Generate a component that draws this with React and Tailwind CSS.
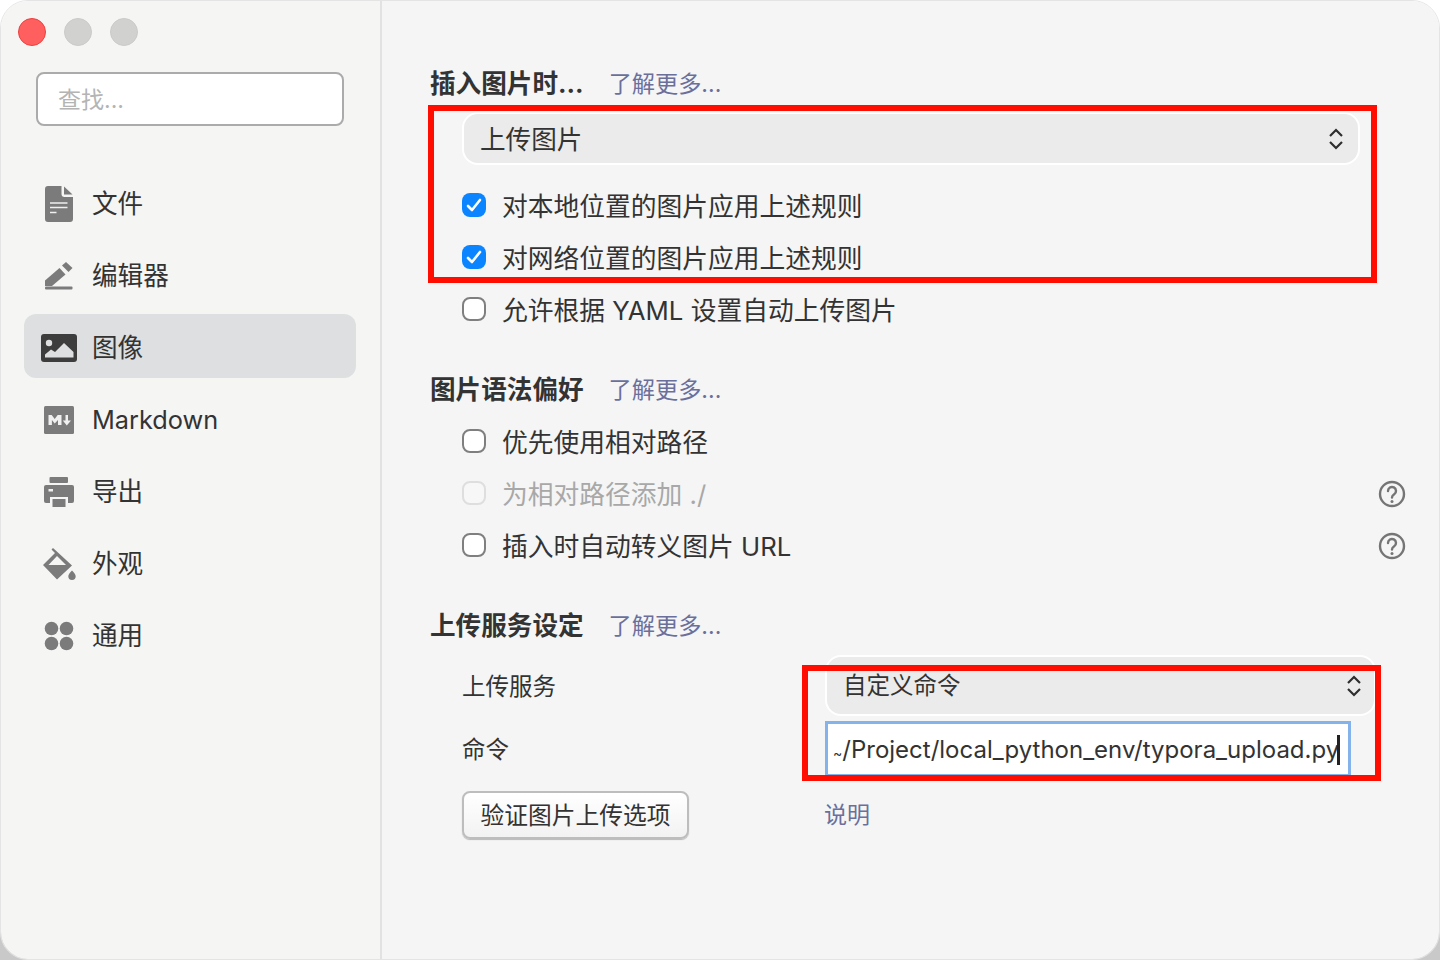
function FileIcon() {
  return (
    <svg width="28" height="36" viewBox="0 0 28 36">
      <path d="M3 0h13.500v8a3 3 0 0 0 3 3H28v22a3 3 0 0 1-3 3H3a3 3 0 0 1-3-3V3a3 3 0 0 1 3-3z" fill="#7b7b7b" />
      <path d="M19 0.500 27.500 8.500H19z" fill="#7b7b7b" />
      <path d="M5 17h17.500M5 21.500h17.500M5 26.500h6.500" stroke="#f0f0f0" strokeWidth="1.600" />
    </svg>
  )
}

function PenIcon() {
  return (
    <svg width="28" height="28" viewBox="0 0 28 28">
      <path d="M0 18.500 14.500 6l6 6.500L7 24H0z" fill="#7b7b7b" />
      <path d="M17 3.500 21 0l6.500 6L23.500 10z" fill="#7b7b7b" />
      <rect x="0" y="24.500" width="27.500" height="3" rx="1" fill="#7b7b7b" />
    </svg>
  )
}

function ImageIcon() {
  return (
    <svg width="36" height="28" viewBox="0 0 36 28">
      <rect width="36" height="28" rx="3" fill="#3d3d3d" />
      <circle cx="8" cy="9" r="3.200" fill="#dedfe1" />
      <path d="M4 23.500v-3l6-5 4 2.500 9-9 9.500 9v5.500z" fill="#dedfe1" />
    </svg>
  )
}

function MarkdownIcon() {
  return (
    <svg width="30" height="28" viewBox="0 0 30 28">
      <rect width="30" height="28" rx="1.500" fill="#7b7b7b" />
      <path d="M4.500 19V9h3.200l3 4 3-4h3.800v10h-3.500v-5l-3.300 3.500L7.900 14v5z" fill="#f0f0f0" />
      <path d="M21.500 9h2.500v5.500h3L22.800 19.500 18.800 14.500h2.700z" fill="#f0f0f0" />
    </svg>
  )
}

function PrinterIcon() {
  return (
    <svg width="30" height="30" viewBox="0 0 30 30">
      <rect x="5.500" y="0" width="18.500" height="6" rx="1" fill="#7b7b7b" />
      <path d="M2 8h26a2 2 0 0 1 2 2v14a2 2 0 0 1-2 2H2a2 2 0 0 1-2-2V10a2 2 0 0 1 2-2z" fill="#7b7b7b" />
      <rect x="4.500" y="12" width="4.500" height="2.500" fill="#f0f0f0" />
      <rect x="6" y="20" width="18" height="10" fill="#f5f5f4" />
      <rect x="8.500" y="22" width="13" height="8" fill="#7b7b7b" />
    </svg>
  )
}

function BucketIcon() {
  return (
    <svg className="ml-[2px]" width="34" height="33" viewBox="0 0 34 33">
      <path d="M10 0l5.500 5L29 17.500 14 31.500 0 17 12 5 8.500 1.500z" fill="#7b7b7b" />
      <path d="M14 8l9 9H5.500z" fill="#f5f5f4" />
      <path d="M29 22.500c2 2.300 3.700 4 3.700 5.800a3.700 3.700 0 0 1-7.400 0c0-1.800 1.700-3.500 3.700-5.800z" fill="#7b7b7b" />
    </svg>
  )
}

function GridIcon() {
  return (
    <svg width="30" height="30" viewBox="0 0 30 30" fill="#7b7b7b">
      <circle cx="7.500" cy="7.500" r="6.800" />
      <circle cx="22.500" cy="7.500" r="6.800" />
      <circle cx="7.500" cy="22.500" r="6.800" />
      <circle cx="22.500" cy="22.500" r="6.800" />
    </svg>
  )
}

const navItems = [
  { label: '文件', icon: <FileIcon />, text: 'text-[25.6px]' },
  { label: '编辑器', icon: <PenIcon />, text: 'text-[25.6px]' },
  { label: '图像', icon: <ImageIcon />, text: 'text-[25.6px]', active: true },
  { label: 'Markdown', icon: <MarkdownIcon />, text: 'text-[25.3px]' },
  { label: '导出', icon: <PrinterIcon />, text: 'text-[25.6px]' },
  { label: '外观', icon: <BucketIcon />, text: 'text-[25.6px]' },
  { label: '通用', icon: <GridIcon />, text: 'text-[25.6px]' },
]

function Chevrons() {
  return (
    <svg width="16" height="22" viewBox="0 0 16 22" fill="none" stroke="#2e2e2e" strokeWidth="2.200">
      <path d="M2 8l6-6 6 6M2 14l6 6 6-6" />
    </svg>
  )
}

function Heading({ title }) {
  return (
    <div className="flex h-9 items-center pt-[2px]">
      <span className="text-[25.6px] font-bold text-[#333333]">{title}</span>
      <a className="ml-[25px] text-[23.2px] text-[#6b6f9c]">了解更多...</a>
    </div>
  )
}

function Check({ label, checked, disabled, help }) {
  return (
    <div className="flex h-[52px] items-center pl-8">
      {checked ? (
        <span className="flex h-6 w-6 items-center justify-center rounded-lg bg-[#0a84ff]">
          <svg width="16" height="14" viewBox="0 0 16 14" fill="none" stroke="#ffffff" strokeWidth="2.600" strokeLinecap="round" strokeLinejoin="round">
            <path d="M2 8l4 4 8-10" />
          </svg>
        </span>
      ) : (
        <span className={`h-6 w-6 rounded-lg border-[2.5px] ${disabled ? 'border-[#dedede] bg-[#f7f7f7]' : 'border-[#7f7f7f] bg-white'}`} />
      )}
      <span className={`ml-4 flex-1 pt-[5px] text-[25.75px] ${disabled ? 'text-[#a8a8a8]' : 'text-[#333333]'}`}>{label}</span>
      {help && (
        <svg className="mr-[33px] mt-[2px]" width="28" height="28" viewBox="0 0 28 28" fill="none" stroke="#757575" strokeWidth="2.400">
          <circle cx="14" cy="14" r="12" />
          <path d="M10 11a4 4 0 1 1 6.200 3.300c-1.400.9-2.200 1.700-2.200 3.200" strokeLinecap="round" />
          <circle cx="14" cy="21.500" r="1.500" fill="#757575" stroke="none" />
        </svg>
      )}
    </div>
  )
}

function Select({ label, className, textClass }) {
  return (
    <div className={`flex items-center justify-between rounded-2xl border-2 border-white bg-[#ebebeb] pl-4 text-[#333333] ${className}`}>
      <span className={textClass}>{label}</span>
      <Chevrons />
    </div>
  )
}

export default function App() {
  return (
    <div
      className="relative h-[960px] w-[1440px] overflow-hidden bg-[linear-gradient(to_bottom,#ffffff_50%,#c9c9c9_50%)]"
      style={{ fontFamily: 'Inter, "Noto Sans CJK SC", sans-serif' }}
    >
      <div className="flex h-full overflow-hidden rounded-[28px] border border-[#e4e4e4]">
        <aside className="flex w-[381px] shrink-0 flex-col border-r-2 border-[#e2e2e2] bg-[#f5f5f4]">
          <div className="flex gap-[18px] pl-[17px] pt-[17px]">
            <span className="h-7 w-7 rounded-full border border-[#ec4141] bg-[#ff5f5f]" />
            <span className="h-7 w-7 rounded-full border border-[#cacac8] bg-[#d1d1cf]" />
            <span className="h-7 w-7 rounded-full border border-[#cacac8] bg-[#d1d1cf]" />
          </div>
          <div className="ml-[35px] mt-[26px] flex h-[54px] w-[308px] items-center rounded-lg border-2 border-[#ababab] bg-white pl-5 pt-[2px] text-[23px] text-[#b4b4b4]">
            查找...
          </div>
          <nav className="ml-[23px] mt-[44px] flex w-[332px] flex-col gap-2">
            {navItems.map((item) => (
              <div
                key={item.label}
                className={`flex h-16 items-center rounded-xl pt-[4px] ${item.active ? 'bg-[#dedfe1]' : ''}`}
              >
                <span className="flex w-[69px] shrink-0 items-center justify-center pl-[1px]">{item.icon}</span>
                <span className={`ml-[-1px] text-[#333333] ${item.text}`}>{item.label}</span>
              </div>
            ))}
          </nav>
        </aside>
        <main className="flex-1 bg-[#f5f5f5] pl-[48px] pt-[64px]">
          <Heading title="插入图片时..." />
          <div className="mt-[11px] mr-[79px] ml-8">
            <Select label="上传图片" className="h-[53px] pr-[14px]" textClass="pt-[4px] text-[25.6px]" />
          </div>
          <div className="mt-[14px]">
            <Check label="对本地位置的图片应用上述规则" checked />
            <Check label="对网络位置的图片应用上述规则" checked />
            <Check label="允许根据 YAML 设置自动上传图片" />
          </div>
          <div className="mt-[36px]">
            <Heading title="图片语法偏好" />
          </div>
          <div className="mt-[8px]">
            <Check label="优先使用相对路径" />
            <Check label="为相对路径添加 ./" disabled help />
            <Check label="插入时自动转义图片 URL" help />
          </div>
          <div className="mt-[36px]">
            <Heading title="上传服务设定" />
          </div>
          <div className="mt-[12px] ml-8 grid grid-cols-[363px_1fr] items-center text-[23.5px] text-[#333333]">
            <span className="pt-[2px]">上传服务</span>
            <Select label="自定义命令" className="mr-[63px] h-[61px] pr-[12px]" textClass="pt-[1px] text-[23.5px]" />
          </div>
          <div className="mt-[5px] ml-8 grid grid-cols-[363px_1fr] items-center text-[#333333]">
            <span className="pt-[2px] text-[23.5px]">命令</span>
            <div className="mr-[88px] flex h-[56px] items-center overflow-hidden border-[3px] border-[#84b2ea] bg-white pl-[5px] pt-[2px] text-[24px] whitespace-nowrap">
              <span>
                <span className="text-[14px]">~</span>/Project/local_python_env/typora_upload.py
              </span>
              <span className="ml-[-2px] h-[30px] w-[3px] shrink-0 bg-[#222222]" />
            </div>
          </div>
          <div className="mt-[14px] ml-8 grid grid-cols-[362px_1fr] items-center">
            <button className="h-12 w-[227px] rounded-lg border-2 border-[#bdbdbd] bg-gradient-to-b from-white to-[#f2f2f2] pt-[2px] text-[23.75px] text-[#333333] shadow-[0_1px_1px_rgba(0,0,0,0.25)]">
              验证图片上传选项
            </button>
            <a className="pt-[1px] text-[23px] text-[#6b6f9c]">说明</a>
          </div>
        </main>
      </div>
      {/* red annotation boxes */}
      <div className="absolute left-[428px] top-[105px] h-[178px] w-[949px] border-[6px] border-[#ff0d00]" />
      <div className="absolute left-[802px] top-[665px] h-[116px] w-[579px] border-[6px] border-[#ff0d00]" />
    </div>
  )
}
